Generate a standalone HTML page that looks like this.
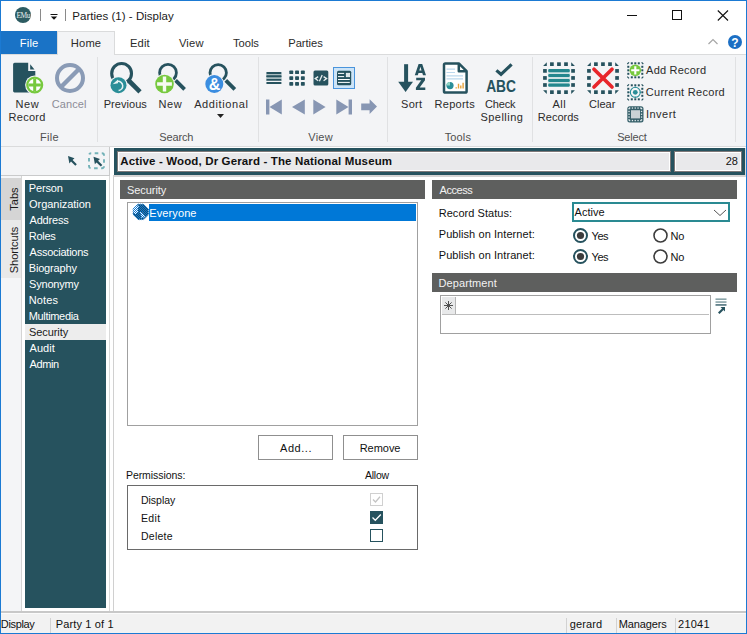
<!DOCTYPE html>
<html><head><meta charset="utf-8"><title>Parties (1) - Display</title>
<style>
html,body{margin:0;padding:0;width:747px;height:634px;overflow:hidden;background:#fff}
body{position:relative;font-family:"Liberation Sans", sans-serif;}
</style></head><body>
<div style="position:absolute;left:0px;top:0px;width:747px;height:634px;background:#ffffff"></div>
<svg style="position:absolute;left:15px;top:7px;overflow:visible;" width="16" height="16" viewBox="0 0 16 16"><circle cx="8" cy="8" r="8" fill="#2d5c62"/><text x="8.2" y="10.8" font-family="Liberation Serif" font-size="7.5" fill="#e8eeee" text-anchor="middle" letter-spacing="-0.6">EMu</text></svg>
<div style="position:absolute;left:40px;top:9px;width:1px;height:12px;background:#8a8a8a"></div>
<svg style="position:absolute;left:50px;top:13px;overflow:visible;" width="8" height="8" viewBox="0 0 8 8"><rect x="0.5" y="1" width="7" height="1" fill="#111"/><path d="M0.8 3.5 L7.2 3.5 L4 6.8 Z" fill="#111"/></svg>
<div style="position:absolute;left:65px;top:9px;width:1px;height:12px;background:#8a8a8a"></div>
<div style="position:absolute;left:72.28px;top:9.02px;font-size:11.5px;line-height:15px;letter-spacing:0.028px;color:#1a1a1a;font-weight:normal;white-space:nowrap;">Parties (1) - Display</div>
<div style="position:absolute;left:627px;top:15px;width:10px;height:1px;background:#111"></div>
<div style="position:absolute;left:672px;top:10px;width:10px;height:10px;border:1px solid #111;box-sizing:border-box"></div>
<svg style="position:absolute;left:717px;top:10px;overflow:visible;" width="12" height="11" viewBox="0 0 12 11"><path d="M0.8 0.5 L11 10.5 M11 0.5 L0.8 10.5" stroke="#111" stroke-width="1.1" fill="none"/></svg>
<svg style="position:absolute;left:708px;top:38px;overflow:visible;" width="10" height="7" viewBox="0 0 10 7"><path d="M0.5 6 L5 1.5 L9.5 6" stroke="#a6a6a6" stroke-width="1.2" fill="none"/></svg>
<svg style="position:absolute;left:728px;top:35px;overflow:visible;" width="14" height="14" viewBox="0 0 14 14"><circle cx="7" cy="7" r="7" fill="#1c6fc4"/><text x="7" y="11.5" font-family="Liberation Sans" font-weight="bold" font-size="12" fill="#fff" text-anchor="middle">?</text></svg>
<div style="position:absolute;left:1px;top:54px;width:745px;height:1px;background:#dadbdc"></div>
<div style="position:absolute;left:1px;top:31px;width:56px;height:23px;background:#1a73c6"></div>
<div style="position:absolute;left:19.70px;top:36.22px;font-size:11.2px;line-height:15px;letter-spacing:0.189px;color:#ffffff;font-weight:normal;white-space:nowrap;">File</div>
<div style="position:absolute;left:57px;top:31px;width:58px;height:24px;background:#f3f4f6;border:1px solid #dadbdc;border-bottom:none;box-sizing:border-box"></div>
<div style="position:absolute;left:70.80px;top:36.22px;font-size:11.2px;line-height:15px;letter-spacing:0.151px;color:#2b2b2b;font-weight:normal;white-space:nowrap;">Home</div>
<div style="position:absolute;left:129.90px;top:36.22px;font-size:11.2px;line-height:15px;letter-spacing:0.163px;color:#2b2b2b;font-weight:normal;white-space:nowrap;">Edit</div>
<div style="position:absolute;left:178.94px;top:36.22px;font-size:11.2px;line-height:15px;letter-spacing:0.159px;color:#2b2b2b;font-weight:normal;white-space:nowrap;">View</div>
<div style="position:absolute;left:232.88px;top:36.22px;font-size:11.2px;line-height:15px;letter-spacing:-0.009px;color:#2b2b2b;font-weight:normal;white-space:nowrap;">Tools</div>
<div style="position:absolute;left:288.30px;top:36.22px;font-size:11.2px;line-height:15px;letter-spacing:-0.057px;color:#2b2b2b;font-weight:normal;white-space:nowrap;">Parties</div>
<div style="position:absolute;left:1px;top:55px;width:745px;height:91px;background:#f3f4f6"></div>
<div style="position:absolute;left:1px;top:146px;width:745px;height:1px;background:#dadbdc"></div>
<div style="position:absolute;left:97px;top:57px;width:1px;height:85px;background:#e0e1e3"></div>
<div style="position:absolute;left:258px;top:57px;width:1px;height:85px;background:#e0e1e3"></div>
<div style="position:absolute;left:387px;top:57px;width:1px;height:85px;background:#e0e1e3"></div>
<div style="position:absolute;left:532px;top:57px;width:1px;height:85px;background:#e0e1e3"></div>
<div style="position:absolute;left:735px;top:57px;width:1px;height:85px;background:#e0e1e3"></div>
<div style="position:absolute;left:15.52px;top:96.89px;font-size:11px;line-height:14px;letter-spacing:0.600px;color:#2b2b2b;font-weight:normal;white-space:nowrap;">New</div>
<div style="position:absolute;left:8.52px;top:109.79px;font-size:11px;line-height:14px;letter-spacing:0.284px;color:#2b2b2b;font-weight:normal;white-space:nowrap;">Record</div>
<div style="position:absolute;left:51.75px;top:96.89px;font-size:11px;line-height:14px;letter-spacing:0.071px;color:#8c8c96;font-weight:normal;white-space:nowrap;">Cancel</div>
<div style="position:absolute;left:40.12px;top:129.89px;font-size:11px;line-height:14px;letter-spacing:0.288px;color:#4f4f4f;font-weight:normal;white-space:nowrap;">File</div>
<div style="position:absolute;left:103.72px;top:96.89px;font-size:11px;line-height:14px;letter-spacing:0.039px;color:#2b2b2b;font-weight:normal;white-space:nowrap;">Previous</div>
<div style="position:absolute;left:158.62px;top:96.89px;font-size:11px;line-height:14px;letter-spacing:0.563px;color:#2b2b2b;font-weight:normal;white-space:nowrap;">New</div>
<div style="position:absolute;left:194.20px;top:96.89px;font-size:11px;line-height:14px;letter-spacing:0.600px;color:#2b2b2b;font-weight:normal;white-space:nowrap;">Additional</div>
<svg style="position:absolute;left:217px;top:114px;overflow:visible;" width="7" height="4" viewBox="0 0 7 4"><path d="M0 0 L7 0 L3.5 4 Z" fill="#222"/></svg>
<div style="position:absolute;left:159.20px;top:129.89px;font-size:11px;line-height:14px;letter-spacing:-0.121px;color:#4f4f4f;font-weight:normal;white-space:nowrap;">Search</div>
<div style="position:absolute;left:308.25px;top:129.89px;font-size:11px;line-height:14px;letter-spacing:0.268px;color:#4f4f4f;font-weight:normal;white-space:nowrap;">View</div>
<div style="position:absolute;left:401.11px;top:96.89px;font-size:11px;line-height:14px;letter-spacing:0.240px;color:#2b2b2b;font-weight:normal;white-space:nowrap;">Sort</div>
<div style="position:absolute;left:434.62px;top:96.89px;font-size:11px;line-height:14px;letter-spacing:0.261px;color:#2b2b2b;font-weight:normal;white-space:nowrap;">Reports</div>
<div style="position:absolute;left:485.05px;top:96.89px;font-size:11px;line-height:14px;letter-spacing:-0.159px;color:#2b2b2b;font-weight:normal;white-space:nowrap;">Check</div>
<div style="position:absolute;left:480.40px;top:109.79px;font-size:11px;line-height:14px;letter-spacing:0.472px;color:#2b2b2b;font-weight:normal;white-space:nowrap;">Spelling</div>
<div style="position:absolute;left:444.68px;top:129.89px;font-size:11px;line-height:14px;letter-spacing:0.155px;color:#4f4f4f;font-weight:normal;white-space:nowrap;">Tools</div>
<div style="position:absolute;left:552.40px;top:96.89px;font-size:11px;line-height:14px;letter-spacing:0.503px;color:#2b2b2b;font-weight:normal;white-space:nowrap;">All</div>
<div style="position:absolute;left:537.82px;top:109.79px;font-size:11px;line-height:14px;letter-spacing:0.015px;color:#2b2b2b;font-weight:normal;white-space:nowrap;">Records</div>
<div style="position:absolute;left:589.05px;top:96.89px;font-size:11px;line-height:14px;letter-spacing:-0.005px;color:#2b2b2b;font-weight:normal;white-space:nowrap;">Clear</div>
<div style="position:absolute;left:617.21px;top:129.89px;font-size:11px;line-height:14px;letter-spacing:-0.175px;color:#4f4f4f;font-weight:normal;white-space:nowrap;">Select</div>
<div style="position:absolute;left:646.10px;top:62.99px;font-size:11px;line-height:14px;letter-spacing:0.215px;color:#2b2b2b;font-weight:normal;white-space:nowrap;">Add Record</div>
<div style="position:absolute;left:645.75px;top:84.69px;font-size:11px;line-height:14px;letter-spacing:0.291px;color:#2b2b2b;font-weight:normal;white-space:nowrap;">Current Record</div>
<div style="position:absolute;left:646.01px;top:106.79px;font-size:11px;line-height:14px;letter-spacing:0.469px;color:#2b2b2b;font-weight:normal;white-space:nowrap;">Invert</div>
<svg style="position:absolute;left:12px;top:62px;overflow:visible;" width="34" height="34" viewBox="0 0 34 34"><path d="M2.6 0.8 H16.2 V9.1 H23.3 V29 Q23.3 30.4 21.9 30.4 H2.5 Q1.1 30.4 1.1 29 V2.3 Q1.1 0.8 2.6 0.8 Z" fill="#26525e"/><path d="M18.2 2.3 V7.4 H22.5 Z" fill="#26525e"/><circle cx="22.7" cy="23" r="9.6" fill="#f3f4f6"/><circle cx="22.7" cy="23" r="7.4" fill="#ffffff" stroke="#77c93e" stroke-width="2.3"/><path d="M22.7 16.8 V29.2 M16.5 23 H28.9" stroke="#77c93e" stroke-width="3"/></svg>
<svg style="position:absolute;left:54px;top:62px;overflow:visible;" width="32" height="32" viewBox="0 0 32 32"><circle cx="16" cy="16" r="13" fill="none" stroke="#8a9bb6" stroke-width="4"/><path d="M7 25 L25 7" stroke="#8a9bb6" stroke-width="4.4"/></svg>
<svg style="position:absolute;left:110px;top:62px;overflow:visible;" width="32" height="32" viewBox="0 0 32 32"><circle cx="11.6" cy="11.4" r="9.9" fill="none" stroke="#26525e" stroke-width="3.1"/><path d="M18.2 18.0 L30 29.8" stroke="#26525e" stroke-width="4.6"/><circle cx="8.5" cy="23.2" r="9.2" fill="#f3f4f6"/><circle cx="8.5" cy="23.2" r="8" fill="#2a8e98"/><path d="M2.6 22.2 L8 17.4 L8 21.2 Z" fill="#e6f3f4"/><path d="M7.6 19.4 A4.2 4.2 0 1 1 8.6 28.6" fill="none" stroke="#e6f3f4" stroke-width="1.5"/></svg>
<svg style="position:absolute;left:156px;top:62px;overflow:visible;" width="32" height="32" viewBox="0 0 32 32"><circle cx="12" cy="10.8" r="8.4" fill="none" stroke="#26525e" stroke-width="2.8"/><path d="M19.6 18.4 L28.6 27.4" stroke="#26525e" stroke-width="3.8"/><circle cx="8.5" cy="22" r="10.2" fill="#f3f4f6"/><circle cx="8.5" cy="22" r="9.3" fill="#77c93e"/><path d="M8.5 14.6 V29.4 M1.1 22 H15.9" stroke="#f6faf2" stroke-width="3.4"/></svg>
<svg style="position:absolute;left:207px;top:62px;overflow:visible;" width="32" height="32" viewBox="0 0 32 32"><circle cx="11.2" cy="10.8" r="8.2" fill="none" stroke="#26525e" stroke-width="2.8"/><path d="M18.8 18.4 L27.8 27.4" stroke="#26525e" stroke-width="3.8"/><circle cx="7.3" cy="22" r="9.9" fill="#f3f4f6"/><circle cx="7.3" cy="22" r="9" fill="#3b8de0"/><text x="7.6" y="28.2" font-family="Liberation Sans" font-weight="bold" font-size="16" fill="#fff" text-anchor="middle">&amp;</text></svg>
<svg style="position:absolute;left:266px;top:71px;overflow:visible;" width="16" height="14" viewBox="0 0 16 14"><rect x="0.2" y="3" width="15.4" height="5" fill="#a9bcc0"/><rect x="0.2" y="1.1" width="15.4" height="1.9" rx="0.9" fill="#26525e"/><rect x="0.2" y="4.3" width="15.4" height="1.9" rx="0.9" fill="#26525e"/><rect x="0.2" y="7.9" width="15.4" height="1.9" rx="0.9" fill="#26525e"/><rect x="0.2" y="11.1" width="15.4" height="1.9" rx="0.9" fill="#26525e"/></svg>
<svg style="position:absolute;left:289px;top:70px;overflow:visible;" width="16" height="16" viewBox="0 0 16 16"><rect x="0.3" y="0.5" width="3.9" height="3.6" rx="0.7" fill="#26525e"/><rect x="6.1" y="0.5" width="3.9" height="3.6" rx="0.7" fill="#26525e"/><rect x="11.9" y="0.5" width="3.9" height="3.6" rx="0.7" fill="#26525e"/><rect x="0.3" y="6.3" width="3.9" height="3.6" rx="0.7" fill="#26525e"/><rect x="6.1" y="6.3" width="3.9" height="3.6" rx="0.7" fill="#26525e"/><rect x="11.9" y="6.3" width="3.9" height="3.6" rx="0.7" fill="#26525e"/><rect x="0.3" y="12.1" width="3.9" height="3.6" rx="0.7" fill="#26525e"/><rect x="6.1" y="12.1" width="3.9" height="3.6" rx="0.7" fill="#26525e"/><rect x="11.9" y="12.1" width="3.9" height="3.6" rx="0.7" fill="#26525e"/></svg>
<svg style="position:absolute;left:313px;top:70px;overflow:visible;" width="16" height="16" viewBox="0 0 16 16"><rect x="0.5" y="0.5" width="14.8" height="15.1" rx="1.5" fill="#26525e"/><path d="M5.2 6.6 L2.2 8.6 L5.2 10.7 M9.2 5 L6.4 11.2 M10.6 6.6 L13.6 8.6 L10.6 10.7" stroke="#e8eeef" stroke-width="1.3" fill="none"/></svg>
<div style="position:absolute;left:333px;top:67px;width:22px;height:22px;background:#cde4f7;border:1px solid #4a94dc;box-sizing:border-box"></div>
<svg style="position:absolute;left:336px;top:70px;overflow:visible;" width="16" height="16" viewBox="0 0 16 16"><rect x="1" y="0.8" width="14.2" height="14.4" rx="1.5" fill="#26525e"/><rect x="2" y="2.9" width="6.1" height="1" fill="#fff"/><rect x="2" y="6.1" width="6.1" height="1" fill="#fff"/><rect x="10.2" y="3.2" width="3.5" height="3.6" fill="#dfe8ea" stroke="#fff" stroke-width="0.6"/><rect x="2" y="9" width="11.8" height="1" fill="#fff"/><rect x="2" y="11.9" width="11.8" height="1" fill="#fff"/></svg>
<svg style="position:absolute;left:266px;top:99px;overflow:visible;" width="17" height="16" viewBox="0 0 17 16"><rect x="0" y="0.5" width="3.4" height="15" fill="#8796b3"/><path d="M3.5 8 L15.8 0.5 V15.5 Z" fill="#8796b3"/></svg>
<svg style="position:absolute;left:291px;top:99px;overflow:visible;" width="15" height="16" viewBox="0 0 15 16"><path d="M1 8 L13.8 0.5 V15.5 Z" fill="#8796b3"/></svg>
<svg style="position:absolute;left:313px;top:99px;overflow:visible;" width="14" height="16" viewBox="0 0 14 16"><path d="M0.3 0.5 L12.6 8 L0.3 15.5 Z" fill="#8796b3"/></svg>
<svg style="position:absolute;left:336px;top:99px;overflow:visible;" width="17" height="16" viewBox="0 0 17 16"><path d="M0.3 0.5 L12.5 8 L0.3 15.5 Z" fill="#8796b3"/><rect x="12.6" y="0.5" width="3.4" height="15" fill="#8796b3"/></svg>
<svg style="position:absolute;left:361px;top:99px;overflow:visible;" width="17" height="16" viewBox="0 0 17 16"><path d="M0.2 4.5 H8.6 V0.3 L16 7.6 L8.6 15 V11.2 H0.2 Z" fill="#8796b3"/></svg>
<svg style="position:absolute;left:397px;top:62px;overflow:visible;" width="32" height="32" viewBox="0 0 32 32"><rect x="7.1" y="2.2" width="4" height="18" fill="#26525e"/><path d="M1.2 19.8 H16 L8.6 30 Z" fill="#26525e"/><path fill-rule="evenodd" d="M17.8 13.3 L21.6 1.9 H25.2 L29 13.3 H26 L25.3 10.9 H21.5 L20.8 13.3 Z M22.3 8.4 H24.5 L23.4 4.8 Z" fill="#26525e"/><path d="M19.2 15.8 H28 V18.3 L22.7 25.6 H28.3 V28.1 H18.9 V25.7 L24.2 18.3 H19.2 Z" fill="#26525e"/></svg>
<svg style="position:absolute;left:441px;top:61px;overflow:visible;" width="28" height="34" viewBox="0 0 28 34"><path d="M4.4 2.4 H17.8 L25.6 10.2 V30.2 Q25.6 31.6 24.2 31.6 H4.4 Q3 31.6 3 30.2 V3.8 Q3 2.4 4.4 2.4 Z" fill="#fff" stroke="#26525e" stroke-width="2.5" stroke-linejoin="round"/><path d="M17.8 2.4 V10.2 H25.6" fill="none" stroke="#26525e" stroke-width="2.5" stroke-linejoin="round"/><path d="M5.5 8.2 H14 M5.5 11.5 H14 M5.5 14.8 H22 M5.5 17.8 H22" stroke="#bcd9ee" stroke-width="1.2"/><circle cx="9" cy="24.6" r="3.6" fill="#2a8e98"/><path d="M9 24.6 V21 A3.6 3.6 0 0 0 5.4 24.6 Z" fill="#8fd3c3"/><path d="M15.2 27.6 V26.2 M17.5 27.6 V22.8 M19.8 27.6 V24.4 M22.1 27.6 V21.8" stroke="#e7a23a" stroke-width="1.4"/></svg>
<svg style="position:absolute;left:484px;top:62px;overflow:visible;" width="34" height="32" viewBox="0 0 34 32"><path d="M12.4 8.4 L17 12.3 L27.6 2.4" fill="none" stroke="#26525e" stroke-width="3.2"/><text x="2.2" y="29.8" font-family="Liberation Sans" font-weight="bold" font-size="15.6" fill="#26525e" textLength="29.8" lengthAdjust="spacingAndGlyphs">ABC</text></svg>
<svg style="position:absolute;left:543px;top:62px;overflow:visible;" width="32" height="33" viewBox="0 0 32 33"><rect x="7.05" y="0.3" width="3.7" height="3.7" fill="#26525e"/><rect x="7.05" y="28.3" width="3.7" height="3.7" fill="#26525e"/><rect x="0.1" y="7.05" width="3.7" height="3.7" fill="#26525e"/><rect x="28.2" y="7.05" width="3.7" height="3.7" fill="#26525e"/><rect x="14.1" y="0.3" width="3.7" height="3.7" fill="#26525e"/><rect x="14.1" y="28.3" width="3.7" height="3.7" fill="#26525e"/><rect x="0.1" y="14.1" width="3.7" height="3.7" fill="#26525e"/><rect x="28.2" y="14.1" width="3.7" height="3.7" fill="#26525e"/><rect x="21.15" y="0.3" width="3.7" height="3.7" fill="#26525e"/><rect x="21.15" y="28.3" width="3.7" height="3.7" fill="#26525e"/><rect x="0.1" y="21.15" width="3.7" height="3.7" fill="#26525e"/><rect x="28.2" y="21.15" width="3.7" height="3.7" fill="#26525e"/><path d="M0.1 4 L3.8 0.3 V4 Z M28.2 0.3 L31.9 4 H28.2 Z M0.1 28.3 H3.8 V32 Z M28.2 28.3 H31.9 L28.2 32 Z" fill="#26525e"/><rect x="5.2" y="7.6" width="21.6" height="16.6" fill="#cfe3e4"/><rect x="5.2" y="7.1" width="21.6" height="3.1" rx="1.2" fill="#23878d"/><rect x="5.2" y="11.9" width="21.6" height="3.1" rx="1.2" fill="#23878d"/><rect x="5.2" y="16.9" width="21.6" height="3.1" rx="1.2" fill="#23878d"/><rect x="5.2" y="21.6" width="21.6" height="3.1" rx="1.2" fill="#23878d"/></svg>
<svg style="position:absolute;left:587px;top:62px;overflow:visible;" width="32" height="33" viewBox="0 0 32 33"><rect x="7.05" y="0.3" width="3.7" height="3.7" fill="#26525e"/><rect x="7.05" y="28.3" width="3.7" height="3.7" fill="#26525e"/><rect x="0.1" y="7.05" width="3.7" height="3.7" fill="#26525e"/><rect x="28.2" y="7.05" width="3.7" height="3.7" fill="#26525e"/><rect x="14.1" y="0.3" width="3.7" height="3.7" fill="#26525e"/><rect x="14.1" y="28.3" width="3.7" height="3.7" fill="#26525e"/><rect x="0.1" y="14.1" width="3.7" height="3.7" fill="#26525e"/><rect x="28.2" y="14.1" width="3.7" height="3.7" fill="#26525e"/><rect x="21.15" y="0.3" width="3.7" height="3.7" fill="#26525e"/><rect x="21.15" y="28.3" width="3.7" height="3.7" fill="#26525e"/><rect x="0.1" y="21.15" width="3.7" height="3.7" fill="#26525e"/><rect x="28.2" y="21.15" width="3.7" height="3.7" fill="#26525e"/><path d="M0.1 4 L3.8 0.3 V4 Z M28.2 0.3 L31.9 4 H28.2 Z M0.1 28.3 H3.8 V32 Z M28.2 28.3 H31.9 L28.2 32 Z" fill="#26525e"/><path d="M7 7.2 L25 25 M25 7.2 L7 25" stroke="#e8262b" stroke-width="3.7" stroke-linecap="round"/></svg>
<svg style="position:absolute;left:626.5px;top:61.5px;overflow:visible;" width="17" height="17" viewBox="0 0 17 17"><rect x="3.80" y="0.3" width="2" height="2" fill="#26525e"/><rect x="3.80" y="14.3" width="2" height="2" fill="#26525e"/><rect x="0.3" y="3.80" width="2" height="2" fill="#26525e"/><rect x="14.3" y="3.80" width="2" height="2" fill="#26525e"/><rect x="7.30" y="0.3" width="2" height="2" fill="#26525e"/><rect x="7.30" y="14.3" width="2" height="2" fill="#26525e"/><rect x="0.3" y="7.30" width="2" height="2" fill="#26525e"/><rect x="14.3" y="7.30" width="2" height="2" fill="#26525e"/><rect x="10.80" y="0.3" width="2" height="2" fill="#26525e"/><rect x="10.80" y="14.3" width="2" height="2" fill="#26525e"/><rect x="0.3" y="10.80" width="2" height="2" fill="#26525e"/><rect x="14.3" y="10.80" width="2" height="2" fill="#26525e"/><path d="M0.3 2 L2 0.3 M14.6 0.3 L16.3 2 M0.3 14.6 L2 16.3 M16.3 14.6 L14.6 16.3" stroke="#26525e" stroke-width="1.2"/><circle cx="8.3" cy="8.3" r="5.8" fill="#77c93e"/><path d="M8.3 4.2 V12.4 M4.2 8.3 H12.4" stroke="#ffffff" stroke-width="2.1"/></svg>
<svg style="position:absolute;left:626.5px;top:83.5px;overflow:visible;" width="17" height="17" viewBox="0 0 17 17"><rect x="3.80" y="0.3" width="2" height="2" fill="#26525e"/><rect x="3.80" y="14.3" width="2" height="2" fill="#26525e"/><rect x="0.3" y="3.80" width="2" height="2" fill="#26525e"/><rect x="14.3" y="3.80" width="2" height="2" fill="#26525e"/><rect x="7.30" y="0.3" width="2" height="2" fill="#26525e"/><rect x="7.30" y="14.3" width="2" height="2" fill="#26525e"/><rect x="0.3" y="7.30" width="2" height="2" fill="#26525e"/><rect x="14.3" y="7.30" width="2" height="2" fill="#26525e"/><rect x="10.80" y="0.3" width="2" height="2" fill="#26525e"/><rect x="10.80" y="14.3" width="2" height="2" fill="#26525e"/><rect x="0.3" y="10.80" width="2" height="2" fill="#26525e"/><rect x="14.3" y="10.80" width="2" height="2" fill="#26525e"/><path d="M0.3 2 L2 0.3 M14.6 0.3 L16.3 2 M0.3 14.6 L2 16.3 M16.3 14.6 L14.6 16.3" stroke="#26525e" stroke-width="1.2"/><circle cx="8.3" cy="8.3" r="5" fill="none" stroke="#2a8e98" stroke-width="1.1"/><circle cx="8.3" cy="8.3" r="2.4" fill="#2a8e98"/><path d="M8.3 2.6 V4 M8.3 12.6 V14 M2.6 8.3 H4 M12.6 8.3 H14" stroke="#2a8e98" stroke-width="1"/></svg>
<svg style="position:absolute;left:626.5px;top:105.5px;overflow:visible;" width="17" height="17" viewBox="0 0 17 17"><rect x="0.3" y="0.3" width="16.2" height="16.2" rx="2.5" fill="#36606a"/><rect x="4" y="4.2" width="9" height="8.2" fill="#c9d3d6"/><rect x="2.0" y="1.4" width="1.3" height="1.3" fill="#e4ecee"/><rect x="2.0" y="13.9" width="1.3" height="1.3" fill="#e4ecee"/><rect x="4.8" y="1.4" width="1.3" height="1.3" fill="#e4ecee"/><rect x="4.8" y="13.9" width="1.3" height="1.3" fill="#e4ecee"/><rect x="7.6" y="1.4" width="1.3" height="1.3" fill="#e4ecee"/><rect x="7.6" y="13.9" width="1.3" height="1.3" fill="#e4ecee"/><rect x="10.4" y="1.4" width="1.3" height="1.3" fill="#e4ecee"/><rect x="10.4" y="13.9" width="1.3" height="1.3" fill="#e4ecee"/><rect x="13.2" y="1.4" width="1.3" height="1.3" fill="#e4ecee"/><rect x="13.2" y="13.9" width="1.3" height="1.3" fill="#e4ecee"/><rect x="1.4" y="2.0" width="1.3" height="1.3" fill="#e4ecee"/><rect x="13.9" y="2.0" width="1.3" height="1.3" fill="#e4ecee"/><rect x="1.4" y="4.8" width="1.3" height="1.3" fill="#e4ecee"/><rect x="13.9" y="4.8" width="1.3" height="1.3" fill="#e4ecee"/><rect x="1.4" y="7.6" width="1.3" height="1.3" fill="#e4ecee"/><rect x="13.9" y="7.6" width="1.3" height="1.3" fill="#e4ecee"/><rect x="1.4" y="10.4" width="1.3" height="1.3" fill="#e4ecee"/><rect x="13.9" y="10.4" width="1.3" height="1.3" fill="#e4ecee"/><rect x="1.4" y="13.2" width="1.3" height="1.3" fill="#e4ecee"/><rect x="13.9" y="13.2" width="1.3" height="1.3" fill="#e4ecee"/></svg>
<div style="position:absolute;left:1px;top:147px;width:108px;height:28px;background:#f3f4f6"></div>
<div style="position:absolute;left:109px;top:147px;width:1px;height:29px;background:#c9cacb"></div>
<div style="position:absolute;left:1px;top:175px;width:109px;height:1px;background:#c9cacb"></div>
<svg style="position:absolute;left:67px;top:155px;overflow:visible;" width="11" height="12" viewBox="0 0 11 12"><path d="M1 1 L7.5 3.2 L5.6 5 L9.8 9.3 L8.3 10.8 L4 6.6 L2.4 8.5 Z" fill="#26525e"/></svg>
<svg style="position:absolute;left:88px;top:152px;overflow:visible;" width="18" height="18" viewBox="0 0 18 18"><rect x="1" y="1.2" width="15" height="15" rx="2" fill="none" stroke="#73b2b8" stroke-width="1.9" stroke-dasharray="3.6 3.47" stroke-dashoffset="-3.7"/><path d="M5.5 4.8 L12 7 L10.1 8.8 L14.3 13.1 L12.8 14.6 L8.5 10.4 L6.9 12.3 Z" fill="#26525e"/></svg>
<div style="position:absolute;left:1px;top:176px;width:20px;height:436px;background:#f4f5f7"></div>
<div style="position:absolute;left:21px;top:176px;width:1px;height:436px;background:#d4d4d4"></div>
<div style="position:absolute;left:1px;top:178px;width:20px;height:42px;background:#d5d5d5"></div>
<div style="position:absolute;left:1px;top:220px;width:20px;height:58px;background:#e9e9e9"></div>
<div style="position:absolute;left:-16.00px;top:192.19px;width:60px;text-align:center;font-size:11px;line-height:14px;color:#1a1a1a;font-weight:normal;white-space:nowrap;transform:rotate(-90deg);transform-origin:center">Tabs</div>
<div style="position:absolute;left:-26.00px;top:242.69px;width:80px;text-align:center;font-size:11px;line-height:14px;color:#1a1a1a;font-weight:normal;white-space:nowrap;transform:rotate(-90deg);transform-origin:center">Shortcuts</div>
<div style="position:absolute;left:25px;top:180px;width:81px;height:428px;background:#26525e"></div>
<div style="position:absolute;left:25px;top:324px;width:81px;height:16px;background:#ededed"></div>
<div style="position:absolute;left:28.72px;top:180.79px;font-size:11px;line-height:14px;letter-spacing:-0.144px;color:#ffffff;font-weight:normal;white-space:nowrap;">Person</div>
<div style="position:absolute;left:29.11px;top:196.79px;font-size:11px;line-height:14px;letter-spacing:-0.051px;color:#ffffff;font-weight:normal;white-space:nowrap;">Organization</div>
<div style="position:absolute;left:29.60px;top:212.79px;font-size:11px;line-height:14px;letter-spacing:-0.214px;color:#ffffff;font-weight:normal;white-space:nowrap;">Address</div>
<div style="position:absolute;left:28.72px;top:228.79px;font-size:11px;line-height:14px;letter-spacing:-0.260px;color:#ffffff;font-weight:normal;white-space:nowrap;">Roles</div>
<div style="position:absolute;left:29.60px;top:244.79px;font-size:11px;line-height:14px;letter-spacing:-0.253px;color:#ffffff;font-weight:normal;white-space:nowrap;">Associations</div>
<div style="position:absolute;left:28.72px;top:260.79px;font-size:11px;line-height:14px;letter-spacing:-0.172px;color:#ffffff;font-weight:normal;white-space:nowrap;">Biography</div>
<div style="position:absolute;left:29.11px;top:276.79px;font-size:11px;line-height:14px;letter-spacing:-0.225px;color:#ffffff;font-weight:normal;white-space:nowrap;">Synonymy</div>
<div style="position:absolute;left:28.72px;top:292.79px;font-size:11px;line-height:14px;letter-spacing:0.114px;color:#ffffff;font-weight:normal;white-space:nowrap;">Notes</div>
<div style="position:absolute;left:28.72px;top:308.79px;font-size:11px;line-height:14px;letter-spacing:-0.334px;color:#ffffff;font-weight:normal;white-space:nowrap;">Multimedia</div>
<div style="position:absolute;left:29.11px;top:324.79px;font-size:11px;line-height:14px;letter-spacing:-0.102px;color:#1a1a1a;font-weight:normal;white-space:nowrap;">Security</div>
<div style="position:absolute;left:29.60px;top:340.79px;font-size:11px;line-height:14px;letter-spacing:0.033px;color:#ffffff;font-weight:normal;white-space:nowrap;">Audit</div>
<div style="position:absolute;left:29.60px;top:356.79px;font-size:11px;line-height:14px;letter-spacing:-0.393px;color:#ffffff;font-weight:normal;white-space:nowrap;">Admin</div>
<div style="position:absolute;left:109px;top:176px;width:1px;height:436px;background:#d9d9d9"></div>
<div style="position:absolute;left:113px;top:176px;width:1px;height:436px;background:#d0d0d0"></div>
<div style="position:absolute;left:114px;top:148px;width:631px;height:27px;background:#26525e"></div>
<div style="position:absolute;left:745px;top:148px;width:1px;height:29px;background:#dcdcdc"></div>
<div style="position:absolute;left:117px;top:151px;width:554px;height:21px;background:#7d7878"></div>
<div style="position:absolute;left:118px;top:152px;width:552px;height:19px;background:#e9e9eb;border:1px solid #ffffff;box-sizing:border-box"></div>
<div style="position:absolute;left:674px;top:151px;width:68px;height:21px;background:#7d7878"></div>
<div style="position:absolute;left:675px;top:152px;width:66px;height:19px;background:#e9e9eb;border:1px solid #ffffff;box-sizing:border-box"></div>
<div style="position:absolute;left:120.31px;top:153.52px;font-size:11.5px;line-height:15px;letter-spacing:0.137px;color:#111;font-weight:bold;white-space:nowrap;">Active - Wood, Dr Gerard - The National Museum</div>
<div style="position:absolute;left:725.75px;top:153.89px;font-size:11px;line-height:14px;letter-spacing:-0.220px;color:#111;font-weight:normal;white-space:nowrap;">28</div>
<div style="position:absolute;left:113px;top:175px;width:632px;height:2px;background:#d5d3d3"></div>
<div style="position:absolute;left:120px;top:180px;width:305px;height:19px;background:#5e5f5e"></div>
<div style="position:absolute;left:127.00px;top:183.19px;font-size:11px;line-height:14px;letter-spacing:-0.059px;color:#f2f2f2;font-weight:normal;white-space:nowrap;">Security</div>
<div style="position:absolute;left:127px;top:202px;width:291px;height:224px;border:1px solid #a0a0a0;box-sizing:border-box;background:#fff"></div>
<div style="position:absolute;left:149px;top:204px;width:267px;height:17px;background:#0078d7"></div>
<svg style="position:absolute;left:133px;top:204px;overflow:visible;" width="16" height="16" viewBox="0 0 16 16"><defs><pattern id="chk" width="2" height="2" patternUnits="userSpaceOnUse"><rect x="0" y="0" width="1" height="1" fill="#0a78d6"/><rect x="1" y="1" width="1" height="1" fill="#0a78d6"/></pattern><clipPath id="gc"><path d="M5 0.2 H10.6 L15.4 5 V10.8 L10.6 15.6 H5 L0.2 10.8 V5 Z"/></clipPath></defs><g clip-path="url(#gc)"><rect x="0" y="0" width="16" height="16" fill="#1d4f6a"/><path d="M0 5 Q2 1.5 5.5 1.2 Q6.5 3 5 4.5 Q4 6.5 5.5 8 Q3.5 9.5 2.5 10.5 Q0.5 9 0 7 Z M6.5 8.5 Q8.5 7.5 9.5 9 Q11.5 10.5 12 12.5 Q10 14.5 8 13.5 Q9 11.5 6.5 8.5 Z" fill="#ffffff"/><rect x="0" y="0" width="16" height="16" fill="url(#chk)"/></g><path d="M5 0.2 H10.6 L15.4 5 V10.8 L10.6 15.6 H5 L0.2 10.8 V5 Z" fill="none" stroke="url(#chk)" stroke-width="1"/></svg>
<div style="position:absolute;left:149.32px;top:205.79px;font-size:11px;line-height:14px;letter-spacing:0.100px;color:#ffffff;font-weight:normal;white-space:nowrap;">Everyone</div>
<div style="position:absolute;left:258px;top:435px;width:75px;height:25px;border:1px solid #8f8f8f;box-sizing:border-box;background:#fff"></div>
<div style="position:absolute;left:343px;top:435px;width:75px;height:25px;border:1px solid #8f8f8f;box-sizing:border-box;background:#fff"></div>
<div style="position:absolute;left:280.10px;top:440.89px;font-size:11px;line-height:14px;letter-spacing:0.536px;color:#111;font-weight:normal;white-space:nowrap;">Add...</div>
<div style="position:absolute;left:359.72px;top:440.89px;font-size:11px;line-height:14px;letter-spacing:-0.040px;color:#111;font-weight:normal;white-space:nowrap;">Remove</div>
<div style="position:absolute;left:125.96px;top:468.26px;font-size:10.5px;line-height:14px;letter-spacing:-0.061px;color:#111;font-weight:normal;white-space:nowrap;">Permissions:</div>
<div style="position:absolute;left:364.90px;top:468.26px;font-size:10.5px;line-height:14px;letter-spacing:-0.212px;color:#111;font-weight:normal;white-space:nowrap;">Allow</div>
<div style="position:absolute;left:127px;top:485px;width:291px;height:65px;border:1px solid #6a6a6a;box-sizing:border-box"></div>
<div style="position:absolute;left:140.96px;top:493.16px;font-size:10.5px;line-height:14px;letter-spacing:-0.017px;color:#111;font-weight:normal;white-space:nowrap;">Display</div>
<div style="position:absolute;left:140.96px;top:511.16px;font-size:10.5px;line-height:14px;letter-spacing:0.344px;color:#111;font-weight:normal;white-space:nowrap;">Edit</div>
<div style="position:absolute;left:140.96px;top:529.06px;font-size:10.5px;line-height:14px;letter-spacing:0.253px;color:#111;font-weight:normal;white-space:nowrap;">Delete</div>
<div style="position:absolute;left:370px;top:493px;width:13px;height:13px;border:1px solid #d0d0d0;box-sizing:border-box;background:#fff"></div>
<svg style="position:absolute;left:370px;top:493px;overflow:visible;" width="13" height="13" viewBox="0 0 13 13"><path d="M3 6.5 L5.5 9 L10 3.8" stroke="#c4c4c4" stroke-width="1.3" fill="none"/></svg>
<div style="position:absolute;left:370px;top:511px;width:13px;height:13px;background:#26525e"></div>
<svg style="position:absolute;left:370px;top:511px;overflow:visible;" width="13" height="13" viewBox="0 0 13 13"><path d="M2.5 6.5 L5.3 9.3 L10.8 3.5" stroke="#fff" stroke-width="1.3" fill="none"/></svg>
<div style="position:absolute;left:370px;top:529px;width:13px;height:13px;border:1px solid #26525e;box-sizing:border-box;background:#fff"></div>
<div style="position:absolute;left:432px;top:180px;width:305px;height:19px;background:#5e5f5e"></div>
<div style="position:absolute;left:439.60px;top:182.79px;font-size:11px;line-height:14px;letter-spacing:-0.458px;color:#f2f2f2;font-weight:normal;white-space:nowrap;">Access</div>
<div style="position:absolute;left:438.72px;top:205.89px;font-size:11px;line-height:14px;letter-spacing:0.043px;color:#111;font-weight:normal;white-space:nowrap;">Record Status:</div>
<div style="position:absolute;left:438.72px;top:227.29px;font-size:11px;line-height:14px;letter-spacing:0.074px;color:#111;font-weight:normal;white-space:nowrap;">Publish on Internet:</div>
<div style="position:absolute;left:438.72px;top:248.09px;font-size:11px;line-height:14px;letter-spacing:0.074px;color:#111;font-weight:normal;white-space:nowrap;">Publish on Intranet:</div>
<div style="position:absolute;left:572px;top:202px;width:158px;height:20px;border:2px solid #2a8a92;box-sizing:border-box;background:#fff"></div>
<div style="position:absolute;left:574.60px;top:204.99px;font-size:11px;line-height:14px;letter-spacing:0.015px;color:#111;font-weight:normal;white-space:nowrap;">Active</div>
<svg style="position:absolute;left:713px;top:209px;overflow:visible;" width="14" height="8" viewBox="0 0 14 8"><path d="M1 1 L7 6.5 L13 1" stroke="#555" stroke-width="1" fill="none"/></svg>
<svg style="position:absolute;left:573px;top:228px;overflow:visible;" width="16" height="16" viewBox="0 0 16 16"><circle cx="7.5" cy="7.5" r="6.5" fill="#fff" stroke="#26525e" stroke-width="2"/><circle cx="7.5" cy="7.5" r="3.6" fill="#3c3c3c"/></svg>
<svg style="position:absolute;left:653px;top:228px;overflow:visible;" width="16" height="16" viewBox="0 0 16 16"><circle cx="7.5" cy="7.5" r="6.5" fill="#fff" stroke="#3c3c3c" stroke-width="1.6"/></svg>
<div style="position:absolute;left:591.62px;top:229.29px;font-size:11px;line-height:14px;letter-spacing:-0.485px;color:#111;font-weight:normal;white-space:nowrap;">Yes</div>
<div style="position:absolute;left:670.62px;top:229.29px;font-size:11px;line-height:14px;letter-spacing:-0.405px;color:#111;font-weight:normal;white-space:nowrap;">No</div>
<svg style="position:absolute;left:573px;top:249px;overflow:visible;" width="16" height="16" viewBox="0 0 16 16"><circle cx="7.5" cy="7.5" r="6.5" fill="#fff" stroke="#26525e" stroke-width="2"/><circle cx="7.5" cy="7.5" r="3.6" fill="#3c3c3c"/></svg>
<svg style="position:absolute;left:653px;top:249px;overflow:visible;" width="16" height="16" viewBox="0 0 16 16"><circle cx="7.5" cy="7.5" r="6.5" fill="#fff" stroke="#3c3c3c" stroke-width="1.6"/></svg>
<div style="position:absolute;left:591.62px;top:250.49px;font-size:11px;line-height:14px;letter-spacing:-0.485px;color:#111;font-weight:normal;white-space:nowrap;">Yes</div>
<div style="position:absolute;left:670.62px;top:250.49px;font-size:11px;line-height:14px;letter-spacing:-0.405px;color:#111;font-weight:normal;white-space:nowrap;">No</div>
<div style="position:absolute;left:432px;top:273px;width:305px;height:19px;background:#5e5f5e"></div>
<div style="position:absolute;left:438.52px;top:275.89px;font-size:11px;line-height:14px;letter-spacing:0.091px;color:#f2f2f2;font-weight:normal;white-space:nowrap;">Department</div>
<div style="position:absolute;left:440px;top:295px;width:271px;height:39px;border:1px solid #a0a0a0;box-sizing:border-box;background:#fff"></div>
<div style="position:absolute;left:442px;top:297px;width:13px;height:17px;background:#e8e9ea"></div>
<div style="position:absolute;left:455px;top:297px;width:1px;height:17px;background:#b4b4b4"></div>
<div style="position:absolute;left:442px;top:314px;width:267px;height:1px;background:#bdbdbd"></div>
<svg style="position:absolute;left:444px;top:301px;overflow:visible;" width="9" height="9" viewBox="0 0 9 9"><path d="M4.5 0 V9 M0 4.5 H9 M1.4 1.4 L7.6 7.6 M7.6 1.4 L1.4 7.6" stroke="#505050" stroke-width="1"/><circle cx="4.5" cy="4.5" r="1.3" fill="#505050"/></svg>
<svg style="position:absolute;left:715px;top:297px;overflow:visible;" width="13" height="17" viewBox="0 0 13 17"><rect x="0.5" y="1.5" width="11" height="1.3" fill="#6f8f95"/><rect x="0.5" y="4.4" width="11" height="1.3" fill="#6f8f95"/><rect x="0.5" y="7.3" width="11" height="1.3" fill="#26525e"/><path d="M3 15.5 L7 11.5 L5.5 10 H10 V14.5 L8.5 13 L4.5 17 Z" fill="#26525e"/></svg>
<div style="position:absolute;left:1px;top:611px;width:745px;height:2px;background:#c8c8c8"></div>
<div style="position:absolute;left:1px;top:613px;width:745px;height:1px;background:#fbfbfb"></div>
<div style="position:absolute;left:1px;top:614px;width:745px;height:19px;background:#f2f2f2"></div>
<div style="position:absolute;left:50px;top:618px;width:1px;height:15px;background:#d2d2d2"></div>
<div style="position:absolute;left:566px;top:618px;width:1px;height:15px;background:#d2d2d2"></div>
<div style="position:absolute;left:616px;top:618px;width:1px;height:15px;background:#d2d2d2"></div>
<div style="position:absolute;left:675px;top:618px;width:1px;height:15px;background:#d2d2d2"></div>
<div style="position:absolute;left:0.82px;top:616.79px;font-size:11px;line-height:14px;letter-spacing:-0.350px;color:#111;font-weight:normal;white-space:nowrap;">Display</div>
<div style="position:absolute;left:55.72px;top:616.79px;font-size:11px;line-height:14px;letter-spacing:0.146px;color:#111;font-weight:normal;white-space:nowrap;">Party 1 of 1</div>
<div style="position:absolute;left:569.66px;top:616.79px;font-size:11px;line-height:14px;letter-spacing:0.153px;color:#111;font-weight:normal;white-space:nowrap;">gerard</div>
<div style="position:absolute;left:618.82px;top:616.79px;font-size:11px;line-height:14px;letter-spacing:-0.147px;color:#111;font-weight:normal;white-space:nowrap;">Managers</div>
<div style="position:absolute;left:678.05px;top:616.79px;font-size:11px;line-height:14px;letter-spacing:0.216px;color:#111;font-weight:normal;white-space:nowrap;">21041</div>
<div style="position:absolute;left:0px;top:0px;width:747px;height:1px;background:#1b7ad3"></div>
<div style="position:absolute;left:0px;top:633px;width:747px;height:1px;background:#1b7ad3"></div>
<div style="position:absolute;left:0px;top:0px;width:1px;height:634px;background:#1b7ad3"></div>
<div style="position:absolute;left:746px;top:0px;width:1px;height:634px;background:#1b7ad3"></div>
</body></html>
